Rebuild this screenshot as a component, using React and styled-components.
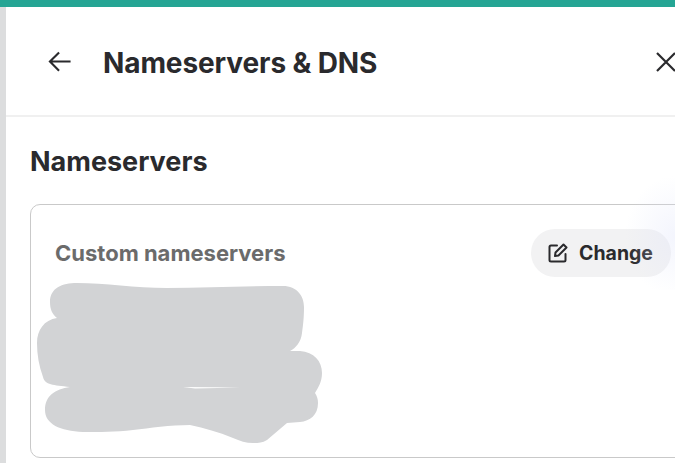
import styled, { createGlobalStyle } from 'styled-components';

const GlobalStyle = createGlobalStyle`
  html, body {
    margin: 0;
    height: 100%;
    overflow: hidden;
    background: #fff;
  }
  * {
    box-sizing: border-box;
  }
`;

const Page = styled.div`
  position: relative;
  width: 675px;
  height: 463px;
  display: flex;
  flex-direction: column;
  overflow: hidden;
  font-family: Inter, 'Liberation Sans', sans-serif;
  color: #2a2a2d;
`;

const TopBar = styled.div`
  height: 7px;
  flex: none;
  background: #25a594;
`;

const Body = styled.div`
  flex: 1;
  display: flex;
  min-height: 0;
`;

const SideStrip = styled.div`
  width: 6px;
  flex: none;
  background: #dcddde;
`;

const Panel = styled.div`
  flex: 1;
  min-width: 0;
  overflow: hidden;
`;

const Header = styled.header`
  height: 110px;
  display: flex;
  align-items: center;
  padding: 0 0 0 42px;
  border-bottom: 2px solid #f0f0f0;
`;

const IconButton = styled.span`
  display: flex;
  flex: none;
  margin-top: 1px;
  color: #2a2a2d;
`;

const HeaderTitle = styled.h1`
  flex: 1;
  margin: 3px 0 0 31px;
  font-size: 28px;
  line-height: 34px;
  font-weight: 700;
  letter-spacing: -0.1px;
`;

const Content = styled.div`
  padding: 27px 0 0 24px;
`;

const SectionTitle = styled.h2`
  margin: 0 0 24px;
  font-size: 27px;
  line-height: 36px;
  font-weight: 700;
`;

const Card = styled.div`
  position: relative;
  width: 680px;
  height: 254px;
  padding: 24px 0 0 24px;
  border: 1px solid #c9c9c9;
  border-radius: 10px;
`;

const CardRow = styled.div`
  width: 616px;
  display: flex;
  align-items: center;
  justify-content: space-between;
`;

const CardLabel = styled.span`
  font-size: 22px;
  font-weight: 700;
  color: #6b6b6b;
`;

const ChangeButton = styled.button`
  display: flex;
  align-items: center;
  gap: 11px;
  width: 140px;
  height: 48px;
  padding: 0 0 0 17px;
  border: none;
  border-radius: 24px;
  background: #f2f2f3;
  color: #2a2a2d;
  font-family: inherit;
  font-size: 19.500px;
  font-weight: 700;
`;

const Redaction = styled.svg`
  position: absolute;
  left: -1px;
  top: -1px;
  pointer-events: none;
`;

// faint blue haze lying over the right edge of the card
const EdgeGlow = styled.div`
  position: absolute;
  left: 615px;
  top: 170px;
  width: 60px;
  height: 120px;
  background: radial-gradient(ellipse 50px 60px at 100% 55%, rgba(226, 230, 250, 0.4), rgba(226, 230, 250, 0));
  pointer-events: none;
`;

const BackIcon = () => (
  <svg width="24" height="24" viewBox="0 0 24 24" fill="none" stroke="currentColor" strokeWidth="2.2">
    <path d="M23 12H1.500M11 2.500 1.500 12l9.500 9.500" transform="translate(0.5 0) scale(0.96)" />
  </svg>
);

const CloseIcon = () => (
  <svg width="20" height="20" viewBox="0 0 20 20" fill="none" stroke="currentColor" strokeWidth="2.2">
    <path d="M2 1l18 18M20 1 2 19" />
  </svg>
);

const EditIcon = () => (
  <svg width="20" height="20" viewBox="0 0 20 20" fill="none" stroke="currentColor" strokeWidth="2" strokeLinejoin="round" strokeLinecap="round">
    <path d="M9 2.500H3a1.500 1.500 0 0 0-1.500 1.500v13A1.500 1.500 0 0 0 3 18.500h13a1.500 1.500 0 0 0 1.500-1.500v-6" />
    <path d="M15.500 1.500 18.500 4.500 10.500 12.500 7 13 7.500 9.500z" />
  </svg>
);

export default function App() {
  return (
    <Page>
      <GlobalStyle />
      <TopBar />
      <Body>
        <SideStrip />
        <Panel>
          <Header>
            <IconButton>
              <BackIcon />
            </IconButton>
            <HeaderTitle>Nameservers &amp; DNS</HeaderTitle>
            <IconButton>
              <CloseIcon />
            </IconButton>
          </Header>
          <Content>
            <SectionTitle>Nameservers</SectionTitle>
            <Card>
              <CardRow>
                <CardLabel>Custom nameservers</CardLabel>
                <ChangeButton>
                  <EditIcon />
                  Change
                </ChangeButton>
              </CardRow>
              <Redaction width="680" height="254" viewBox="30 204 680 254">
                <path
                  fill="#d2d3d5"
                  d="M50 302C50 288 62 283 77 283C105 283 135 288 167 288C205 288 245 286 283 286C297 286 304 296 304 307C304 318 303 326 302 333C301 342 296 348 290 351L300 351C314 352 322 361 322 373C322 382 318 388 315 393C317 396 318 399 318 403C318 415 310 421 300 422L287 423L267 440C262 443 258 443 253 443C246 443 240 441 233 438C218 432 205 428 190 425C170 425 150 428 133 430C115 432 100 432 83 432C60 431 45 424 45 410C45 396 55 389 70 387C53 385 45 385 43 377C39 366 37 355 37 343C37 330 44 320 57 318C52 314 50 309 50 302Z"
                />
                <path fill="#fff" d="M183 387L240 387.500L195 388.500Z" />
              </Redaction>
            </Card>
          </Content>
        </Panel>
      </Body>
      <EdgeGlow />
    </Page>
  );
}
